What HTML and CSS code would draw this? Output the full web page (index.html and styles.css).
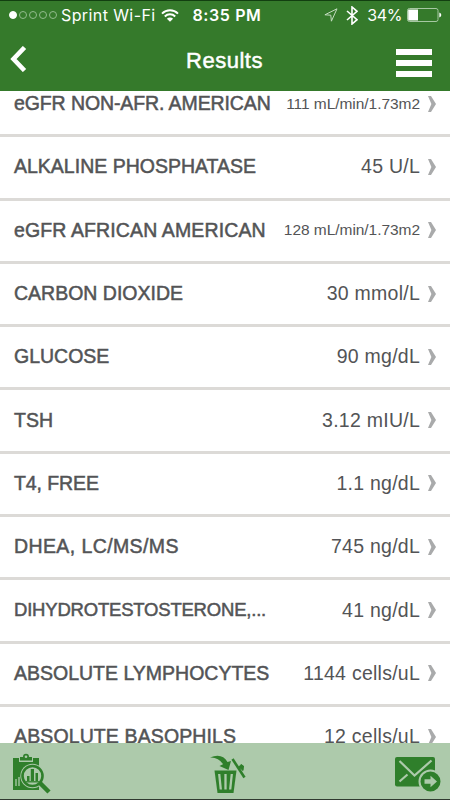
FILE: index.html
```html
<!DOCTYPE html>
<html lang="en">
<head>
    <meta charset="UTF-8">
    <meta name="viewport" content="width=device-width, initial-scale=1.0">
    <title>Results</title>
    <link rel="stylesheet" href="styles.css">
</head>
<body>
    <div class="app">
        <div class="status-bar">
            <div class="signal">
                <span class="dot full"></span><span class="dot"></span><span class="dot"></span><span class="dot"></span><span class="dot"></span>
            </div>
            <span class="carrier">Sprint Wi-Fi</span>
            <svg class="wifi" width="18" height="13" viewBox="0 0 18 13">
                <path d="M1 4.6a11.4 11.4 0 0 1 16 0M3.8 7.5a7.4 7.4 0 0 1 10.4 0" fill="none" stroke="#fff" stroke-width="2"/>
                <path d="M9 12.8L5.9 9.7a4.4 4.4 0 0 1 6.2 0z" fill="#fff"/>
            </svg>
            <span class="time">8:35 PM</span>
            <svg class="location" width="14" height="14" viewBox="0 0 14 14">
                <path d="M13 .8L.9 6.8l5.9.4.6 6z" fill="none" stroke="#c4dcc0" stroke-width="1"/>
            </svg>
            <svg class="bluetooth" width="12" height="19" viewBox="0 0 12 19">
                <path d="M1 5l10 8.7-5 4.3V1l5 4.3L1 14" fill="none" stroke="#fff" stroke-width="1.6"/>
            </svg>
            <span class="percent">34%</span>
            <svg class="battery" width="35" height="14" viewBox="0 0 35 14">
                <rect x=".5" y=".5" width="30.5" height="13" rx="2" fill="none" stroke="#a6c8a2"/>
                <path d="M2 1.5h9v11H2q-.8 0-.8-.8V2.3q0-.8.8-.8z" fill="#fff"/>
                <path d="M32.3 4.5q2 .8 2 2.5t-2 2.5z" fill="#fff"/>
            </svg>
        </div>

        <div class="header">
            <svg class="back" width="17" height="26" viewBox="0 0 17 26">
                <path d="M14.5 1.5L3.5 13l11 11.5" fill="none" stroke="#fff" stroke-width="4.6"/>
            </svg>
            <h1>Results</h1>
            <div class="menu">
                <span></span>
                <span></span>
                <span></span>
            </div>
        </div>

        <div class="results">
            <div class="row"><span class="name first">eGFR NON-AFR. AMERICAN</span><span class="value small">111 mL/min/1.73m2</span><svg class="arrow" viewBox="0 0 8 16"><path d="M0 0h3l5 8-5 8H0l3.4-8z"/></svg></div>
            <div class="row"><span class="name">ALKALINE PHOSPHATASE</span><span class="value">45 U/L</span><svg class="arrow" viewBox="0 0 8 16"><path d="M0 0h3l5 8-5 8H0l3.4-8z"/></svg></div>
            <div class="row"><span class="name spaced">eGFR AFRICAN AMERICAN</span><span class="value small">128 mL/min/1.73m2</span><svg class="arrow" viewBox="0 0 8 16"><path d="M0 0h3l5 8-5 8H0l3.4-8z"/></svg></div>
            <div class="row"><span class="name">CARBON DIOXIDE</span><span class="value">30 mmol/L</span><svg class="arrow" viewBox="0 0 8 16"><path d="M0 0h3l5 8-5 8H0l3.4-8z"/></svg></div>
            <div class="row"><span class="name">GLUCOSE</span><span class="value">90 mg/dL</span><svg class="arrow" viewBox="0 0 8 16"><path d="M0 0h3l5 8-5 8H0l3.4-8z"/></svg></div>
            <div class="row"><span class="name">TSH</span><span class="value">3.12 mIU/L</span><svg class="arrow" viewBox="0 0 8 16"><path d="M0 0h3l5 8-5 8H0l3.4-8z"/></svg></div>
            <div class="row"><span class="name first">T4, FREE</span><span class="value">1.1 ng/dL</span><svg class="arrow" viewBox="0 0 8 16"><path d="M0 0h3l5 8-5 8H0l3.4-8z"/></svg></div>
            <div class="row"><span class="name wide">DHEA, LC/MS/MS</span><span class="value">745 ng/dL</span><svg class="arrow" viewBox="0 0 8 16"><path d="M0 0h3l5 8-5 8H0l3.4-8z"/></svg></div>
            <div class="row"><span class="name long">DIHYDROTESTOSTERONE,...</span><span class="value">41 ng/dL</span><svg class="arrow" viewBox="0 0 8 16"><path d="M0 0h3l5 8-5 8H0l3.4-8z"/></svg></div>
            <div class="row"><span class="name">ABSOLUTE LYMPHOCYTES</span><span class="value">1144 cells/uL</span><svg class="arrow" viewBox="0 0 8 16"><path d="M0 0h3l5 8-5 8H0l3.4-8z"/></svg></div>
            <div class="row"><span class="name spaced">ABSOLUTE BASOPHILS</span><span class="value">12 cells/uL</span><svg class="arrow" viewBox="0 0 8 16"><path d="M0 0h3l5 8-5 8H0l3.4-8z"/></svg></div>
        </div>

        <div class="toolbar">
            <!-- clipboard with magnifier -->
            <svg width="40" height="42" viewBox="0 0 40 42">
                <path d="M1 5h6v4h14V5h6v32H1z" fill="#2f7f2b"/>
                <path d="M8 7.5V4h3a3 3.2 0 0 1 6 0h3v3.5z" fill="#2f7f2b"/>
                <circle cx="14" cy="3.8" r="1.3" fill="#adcaab"/>
                <path d="M4 33v-7M7 33v-9" stroke="#adcaab" stroke-width="1.3"/>
                <circle cx="20.5" cy="23" r="12.2" fill="#adcaab"/>
                <path d="M28 30l9 9" stroke="#2f7f2b" stroke-width="4.5"/>
                <circle cx="20.5" cy="23" r="10" fill="#adcaab" stroke="#2f7f2b" stroke-width="2.6"/>
                <path d="M14 28.8h13" stroke="#2f7f2b" stroke-width="1.3"/>
                <path d="M15 23h2.5v5H15zM18.8 16h3.2v12h-3.2zM23.5 20H26v8h-2.5z" fill="#2f7f2b"/>
            </svg>
            <!-- trash -->
            <svg width="40" height="42" viewBox="0 0 40 42">
                <path d="M3 4.5q12-5 17.500 4.500l3.500-1-2.500 9-9-4 3.500-1.800Q11.500 4 3 4.500z" fill="#2f7f2b"/>
                <path d="M25.500 6L37.500 24.500" stroke="#2f7f2b" stroke-width="2.600"/>
                <path d="M32 14l2-2.500 2.500 1.500-.500 4.500z" fill="#2f7f2b" stroke="#2f7f2b" stroke-width="1"/>
                <path d="M7.500 17.500H29.500l-3 22.500H10.500z" fill="#2f7f2b"/>
                <path d="M12.200 21l1.600 15.500M18.500 21v15.500M24.800 21l-1.600 15.500" stroke="#adcaab" stroke-width="2.300"/>
            </svg>
            <!-- send by mail -->
            <svg width="48" height="40" viewBox="0 0 48 40">
                <rect x="0" y="3" width="40" height="29.500" rx="2" fill="#2f7f2b"/>
                <path d="M4.500 7l15 14.500L36.500 6.500M4.500 27.500l8-7M26.500 20l2 2" fill="none" stroke="#adcaab" stroke-width="2.200"/>
                <circle cx="35.500" cy="27.500" r="11" fill="#2f7f2b" stroke="#adcaab" stroke-width="2"/>
                <path d="M29.500 25.300h6v-3.600l6.500 5.800-6.500 5.800v-3.600h-6z" fill="#adcaab"/>
            </svg>
        </div>
    </div>
</body>
</html>
```
FILE: styles.css
```css
* {
    margin: 0;
    padding: 0;
    box-sizing: border-box;
}

body {
    font-family: "Liberation Sans", Arial, sans-serif;
    background: #fff;
}

.app {
    width: 450px;
    height: 800px;
    display: flex;
    flex-direction: column;
    overflow: hidden;
    border-top: 1px solid #123f10;
    border-bottom: 1px solid #303a30;
}

.status-bar {
    height: 29px;
    flex-shrink: 0;
    display: flex;
    align-items: center;
    padding: 0 8px 1px 9px;
    background: #357a2b;
    color: #fff;
    font-family: Inter, sans-serif;
    font-size: 16px;
    white-space: nowrap;
}

.signal {
    display: flex;
    gap: 2px;
    margin-right: 4px;
}

.dot {
    width: 8px;
    height: 8px;
    border: 1px solid #91bb8c;
    border-radius: 50%;
}

.dot.full {
    background: #fff;
    border-color: #fff;
}

.carrier {
    letter-spacing: 0.4px;
}

.wifi {
    margin-left: 5px;
}

.time {
    margin-left: 14px;
    font-weight: 600;
    letter-spacing: 0.6px;
}

.location {
    margin-left: auto;
}

.bluetooth {
    margin-left: 8px;
}

.percent {
    margin-left: 9px;
    letter-spacing: -0.4px;
}

.battery {
    margin-left: 5px;
}

.header {
    height: 61px;
    flex-shrink: 0;
    display: flex;
    align-items: center;
    justify-content: space-between;
    padding: 0 18px 0 10px;
    background: #357a2b;
}

.back {
    margin-right: 19px;
    margin-bottom: 3px;
}

.header h1 {
    color: #fff;
    font-size: 22px;
    font-weight: normal;
    letter-spacing: 0.5px;
    padding-left: 7px;
    -webkit-text-stroke: 0.5px #fff;
}

.menu {
    display: flex;
    flex-direction: column;
    gap: 5px;
    width: 36px;
    padding-top: 5px;
}

.menu span {
    height: 6px;
    background: #fff;
}

.results {
    flex: 1;
    overflow: hidden;
    display: flex;
    flex-direction: column;
}

.row {
    height: 63.3px;
    flex-shrink: 0;
    display: flex;
    align-items: center;
    padding: 0 14px 1px;
    border-bottom: 3px solid #dcdad7;
    color: #535456;
    font-size: 19.5px;
    white-space: nowrap;
}

.row:first-child {
    margin-top: -17px;
}

.name {
    -webkit-text-stroke: 0.5px #535456;
}

.name.first {
    letter-spacing: -0.1px;
}

.name.spaced {
    letter-spacing: 0.12px;
}

.name.wide {
    letter-spacing: 0.4px;
}

.name.long {
    font-size: 18.5px;
    letter-spacing: -0.2px;
}

.value {
    margin-left: auto;
    letter-spacing: 0.25px;
}

.value.small {
    font-size: 15.5px;
    letter-spacing: -0.05px;
}

.arrow {
    width: 8px;
    height: 16px;
    margin-left: 8px;
    fill: #a9aaab;
}

.toolbar {
    height: 56px;
    flex-shrink: 0;
    display: flex;
    align-items: center;
    justify-content: space-between;
    padding: 5px 7px 0 12px;
    background: #adcaab;
}

.toolbar svg:nth-child(2) {
    margin-left: 6px;
}
```
